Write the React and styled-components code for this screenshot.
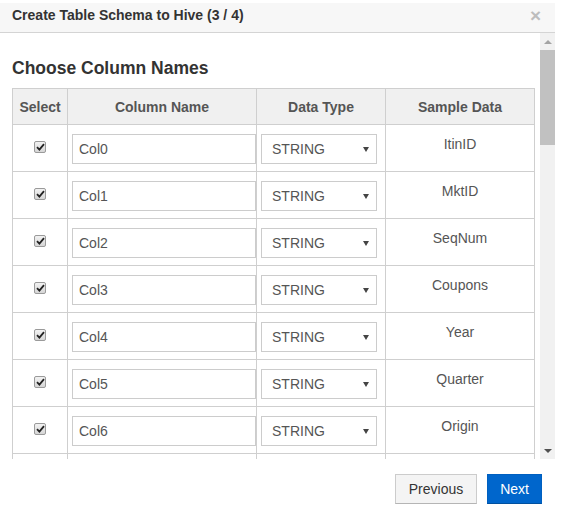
import React from 'react';
import styled, { createGlobalStyle } from 'styled-components';

const GlobalStyle = createGlobalStyle`
  html, body {
    margin: 0;
    padding: 0;
    background: #fff;
    font-family: "Liberation Sans", Arial, sans-serif;
  }
`;

const Dialog = styled.div`
  width: 555px;
  margin-top: 3px;
  background: #fff;
`;

const Header = styled.div`
  display: flex;
  justify-content: space-between;
  align-items: flex-start;
  height: 29px;
  padding: 0 14px 0 12px;
  background: #f7f7f7;
  border-bottom: 1px solid #d4d4d4;
`;

const Title = styled.h4`
  margin: 4px 0 0;
  font-size: 14px;
  line-height: 16px;
  font-weight: bold;
  color: #333;
`;

const Close = styled.span`
  margin-top: 3px;
  font-size: 19px;
  line-height: 20px;
  font-weight: bold;
  color: #bdbdbd;
`;

const Body = styled.div`
  display: flex;
  height: 426px;
`;

const ScrollContent = styled.div`
  flex: 1;
  overflow: hidden;
  padding: 25px 5px 0 12px;
`;

const Heading = styled.h3`
  margin: 0 0 10px;
  font-size: 17.5px;
  line-height: 20px;
  font-weight: bold;
  color: #333;
`;

const Table = styled.table`
  width: 100%;
  border-collapse: collapse;
  table-layout: fixed;
`;

const Th = styled.th`
  height: 35px;
  padding: 0;
  border: 1px solid #cfcfcf;
  background: #f0f0f0;
  font-size: 14px;
  font-weight: bold;
  color: #555;
  text-align: center;
  vertical-align: middle;
`;

const Td = styled.td`
  height: 46px;
  box-sizing: border-box;
  padding: ${p => (p.$pad ? '9px 0 7px 4px' : '9px 0 0')};
  border: 1px solid #cfcfcf;
  font-size: 14px;
  line-height: 20px;
  color: #555;
  text-align: ${p => (p.$pad ? 'left' : 'center')};
  vertical-align: top;
`;

const Check = styled.span`
  display: inline-flex;
  align-items: center;
  justify-content: center;
  box-sizing: border-box;
  width: 12px;
  height: 12px;
  margin-top: 7px;
  border: 1px solid #9a9a9a;
  border-radius: 2px;
  background: linear-gradient(#f2f2f2, #d6d6d6);
`;

const TextInput = styled.input`
  box-sizing: border-box;
  width: 184px;
  height: 30px;
  padding: 0 6px;
  border: 1px solid #cccccc;
  font-family: "Liberation Sans", Arial, sans-serif;
  font-size: 14px;
  color: #555;
  outline: none;
`;

const SelectBox = styled.div`
  display: flex;
  align-items: center;
  justify-content: space-between;
  box-sizing: border-box;
  width: 116px;
  height: 30px;
  padding: 0 7px 0 10px;
  border: 1px solid #cccccc;
  font-size: 14px;
  color: #555;
`;

const Caret = styled.span`
  width: 0;
  height: 0;
  border-left: 3px solid transparent;
  border-right: 3px solid transparent;
  border-top: 5px solid #444;
`;

const Scrollbar = styled.div`
  display: flex;
  flex-direction: column;
  width: 15px;
  background: #f1f1f1;
`;

const ScrollButton = styled.div`
  display: flex;
  justify-content: center;
  align-items: center;
  height: 17px;
`;

const Arrow = styled.span`
  width: 0;
  height: 0;
  border-left: 4px solid transparent;
  border-right: 4px solid transparent;
  ${p => (p.$up
    ? 'border-bottom: 4px solid #a3a3a3;'
    : 'border-top: 4px solid #505050;')}
`;

const Thumb = styled.div`
  height: 95px;
  background: #c1c1c1;
`;

const Track = styled.div`
  flex: 1;
`;

const Footer = styled.div`
  display: flex;
  justify-content: flex-end;
  gap: 10px;
  padding: 15px 13px 0 0;
`;

const Button = styled.button`
  height: 30px;
  padding: 0 ${p => (p.$primary ? '12px' : '13px')};
  font-family: "Liberation Sans", Arial, sans-serif;
  font-size: 14px;
  border: 1px solid ${p => (p.$primary ? '#0060c0' : '#cccccc')};
  border-bottom-color: ${p => (p.$primary ? '#00509f' : '#b5b5b5')};
  background: ${p => (p.$primary ? '#0066cc' : '#f4f4f4')};
  color: ${p => (p.$primary ? '#fff' : '#333')};
`;

const CheckMark = () => (
  <svg width="9" height="8" viewBox="0 0 9 8">
    <path d="M1 4.2 L3.4 6.6 L8 1.2" fill="none" stroke="#222" strokeWidth="1.8" />
  </svg>
);

const columns = ['ItinID', 'MktID', 'SeqNum', 'Coupons', 'Year', 'Quarter', 'Origin'];

export default function App() {
  return (
    <Dialog>
      <GlobalStyle />
      <Header>
        <Title>Create Table Schema to Hive (3 / 4)</Title>
        <Close>×</Close>
      </Header>
      <Body>
        <ScrollContent>
          <Heading>Choose Column Names</Heading>
          <Table>
            <colgroup>
              <col style={{ width: 55 }} />
              <col style={{ width: 189 }} />
              <col style={{ width: 129 }} />
              <col />
            </colgroup>
            <thead>
              <tr>
                <Th>Select</Th>
                <Th>Column Name</Th>
                <Th>Data Type</Th>
                <Th>Sample Data</Th>
              </tr>
            </thead>
            <tbody>
              {columns.map((sample, i) => (
                <tr key={sample}>
                  <Td><Check><CheckMark /></Check></Td>
                  <Td $pad><TextInput defaultValue={`Col${i}`} /></Td>
                  <Td $pad>
                    <SelectBox>STRING<Caret /></SelectBox>
                  </Td>
                  <Td>{sample}</Td>
                </tr>
              ))}
              {/* next row, scrolled out of view */}
              <tr>
                <Td />
                <Td $pad />
                <Td $pad />
                <Td />
              </tr>
            </tbody>
          </Table>
        </ScrollContent>
        <Scrollbar>
          <ScrollButton><Arrow $up /></ScrollButton>
          <Thumb />
          <Track />
          <ScrollButton><Arrow /></ScrollButton>
        </Scrollbar>
      </Body>
      <Footer>
        <Button>Previous</Button>
        <Button $primary>Next</Button>
      </Footer>
    </Dialog>
  );
}
